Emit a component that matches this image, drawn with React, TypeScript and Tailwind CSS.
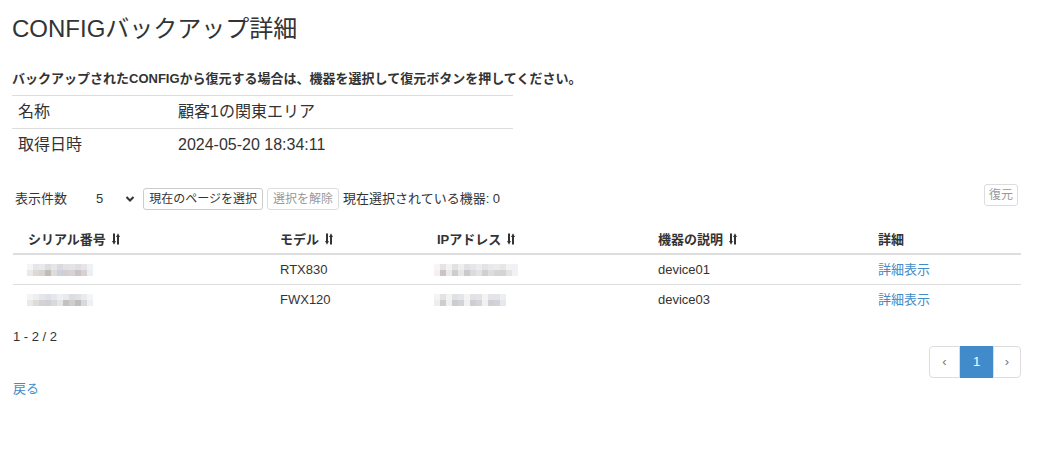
const FONT = { fontFamily: '"Liberation Sans", Arial, "Noto Sans CJK JP", sans-serif' };

// pixelated placeholder for masked values
function Mosaic({ cells }: { cells: string[][] }) {
  return (
    <div className="flex flex-col">
      {cells.map((row, i) => (
        <div key={i} className="flex">
          {row.map((c, j) => (
            <div key={j} className="w-[6px] h-[6px]" style={{ backgroundColor: c }} />
          ))}
        </div>
      ))}
    </div>
  );
}

const serial1 = [
  ['#f4f5f7', '#e6e6ea', '#e9e9ec', '#dcdde3', '#e5e5e8', '#d9dae0', '#e2e2e6', '#e4e3e6', '#dfdfe3', '#e5e5e9', '#eef1f5'],
  ['#e9e9ec', '#dcd9d9', '#d6d3d1', '#c4bbb5', '#dcdcde', '#cfd0d9', '#d2cfd1', '#d8d3d2', '#cbc4c3', '#d7d2cf', '#eceef2'],
];
const serial2 = [
  ['#f3f4f6', '#eceef1', '#e4e6ea', '#dfe1e6', '#e6e7ea', '#edeff2', '#e9eaed', '#dcdde1', '#e0e1e5', '#eaebee', '#f4f5f7'],
  ['#ebe9e8', '#dedbda', '#d3d3d6', '#cfd1d7', '#d9d8da', '#e6e5e6', '#c5c1c2', '#cfcdce', '#bfbdbf', '#d9d9dc', '#eeeff1'],
];
const ip1 = [
  ['#f6f6f7', '#e6e3e3', '#f2f2f3', '#e2e2e5', '#eeeef0', '#e1e1e4', '#e6e6e9', '#ececee', '#e3e3e6', '#e9e9ec', '#ebebee', '#e6e6e9', '#f1f2f4', '#eff1f5'],
  ['#f3f1f0', '#cdc3c2', '#eaeaec', '#d0cdcf', '#e7e5e6', '#cec9c8', '#dbdbdf', '#e3e3e5', '#d2cfd0', '#dddcde', '#d9d4d1', '#d4d3d6', '#e6e4e3', '#f0f2f6'],
];
const ip2 = [
  ['#f4f4f5', '#e3e3e6', '#f2f2f3', '#e0e1e5', '#e4e5e8', '#f3f3f4', '#e1e2e6', '#e3e4e7', '#f4f4f5', '#e4e5e8', '#e4e5e8', '#eceef2'],
  ['#efeded', '#cecccf', '#f0f0f1', '#cdccd0', '#d1d3d9', '#f1f1f2', '#cfced2', '#d4d4d9', '#f1f1f2', '#d0cfd3', '#d2d3da', '#e6e8ed'],
];

function SortIcon() {
  return (
    <svg width="8" height="12" viewBox="0 0 8 12" className="inline-block ml-[6px] -mt-[2px] align-middle">
      <path d="M2 0.5V9.5" stroke="#333" strokeWidth="2" />
      <path d="M0 8L2 11.8L4 8Z" fill="#333" />
      <path d="M6 11.5V2.5" stroke="#333" strokeWidth="2" />
      <path d="M4 4L6 0.2L8 4Z" fill="#333" />
    </svg>
  );
}

const cols = 'grid grid-cols-[252px_157px_221px_220px_158px]';

const rows = [
  { serial: serial1, model: 'RTX830', ip: ip1, desc: 'device01' },
  { serial: serial2, model: 'FWX120', ip: ip2, desc: 'device03' },
];

export default function App() {
  return (
    <div className="min-h-screen bg-white text-[#333] px-[13px]" style={FONT}>
      <h1 className="text-[24px] leading-[26px] pt-[16px] -ml-[1px]">CONFIGバックアップ詳細</h1>

      <p className="mt-[27px] text-[13px] font-bold leading-[20px] -ml-[1px]">
        バックアップされたCONFIGから復元する場合は、機器を選択して復元ボタンを押してください。
      </p>

      <div className="w-[501px] -ml-[1px] mt-[6px] text-[16px]">
        <div className="flex items-center h-[33px] border-t border-[#ddd]">
          <div className="w-[166px] pl-[6px]">名称</div>
          <div>顧客1の関東エリア</div>
        </div>
        <div className="flex items-center h-[33px] border-t border-[#ddd]">
          <div className="w-[166px] pl-[6px]">取得日時</div>
          <div>2024-05-20 18:34:11</div>
        </div>
      </div>

      <div className="mt-[26px] flex items-center text-[13px] h-[24px]">
        <span className="ml-[2px]">表示件数</span>
        <span className="ml-[29px]">5</span>
        <svg width="10" height="8" viewBox="0 0 10 8" className="ml-[22px]">
          <path d="M1.5 2L5 5.5L8.5 2" stroke="#333" strokeWidth="2" fill="none" />
        </svg>
        <button className="ml-[8px] h-[22px] px-[5px] border border-[#ccc] rounded-[3px] bg-white text-[12px] text-[#333]">
          現在のページを選択
        </button>
        <button className="ml-[4px] h-[22px] px-[5px] border border-[#ddd] rounded-[3px] bg-white text-[12px] text-[#999]">
          選択を解除
        </button>
        <span className="ml-[4px]">現在選択されている機器: 0</span>
        <button className="ml-auto mr-[14px] -mt-[8px] h-[22px] px-[4px] border border-[#ddd] rounded-[3px] bg-white text-[12px] text-[#999]">
          復元
        </button>
      </div>

      <div className="mt-[15px] w-[1008px] text-[13px]">
        <div className={`${cols} h-[29px] items-center border-b-2 border-[#ddd] font-bold`}>
          <div className="pl-[15px]">シリアル番号<SortIcon /></div>
          <div className="pl-[15px]">モデル<SortIcon /></div>
          <div className="pl-[15px]">IPアドレス<SortIcon /></div>
          <div className="pl-[15px]">機器の説明<SortIcon /></div>
          <div className="pl-[15px]">詳細</div>
        </div>
        {rows.map((r, i) => (
          <div key={i} className={`${cols} h-[30px] items-center ${i === 0 ? 'border-b border-[#ddd]' : ''}`}>
            <div className="pl-[14px]"><Mosaic cells={r.serial} /></div>
            <div className="pl-[15px]">{r.model}</div>
            <div className="pl-[12px]"><Mosaic cells={r.ip} /></div>
            <div className="pl-[15px]">{r.desc}</div>
            <div className="pl-[15px] text-[#428bca]">詳細表示</div>
          </div>
        ))}
      </div>

      <div className="mt-[12px] text-[13px] leading-[20px]">1 - 2 / 2</div>

      <div className="flex justify-end w-[1008px] mt-[-1px]">
        <div className="flex h-[32px] text-[13px]">
          <div className="w-[31px] flex items-center justify-center border border-[#ddd] rounded-l-[4px] text-[#777]">‹</div>
          <div className="w-[33px] flex items-center justify-center bg-[#428bca] text-white">1</div>
          <div className="w-[28px] flex items-center justify-center border border-[#ddd] rounded-r-[4px] text-[#777]">›</div>
        </div>
      </div>

      <a className="block mt-[1px] text-[13px] text-[#428bca] leading-[20px]">戻る</a>
    </div>
  );
}
